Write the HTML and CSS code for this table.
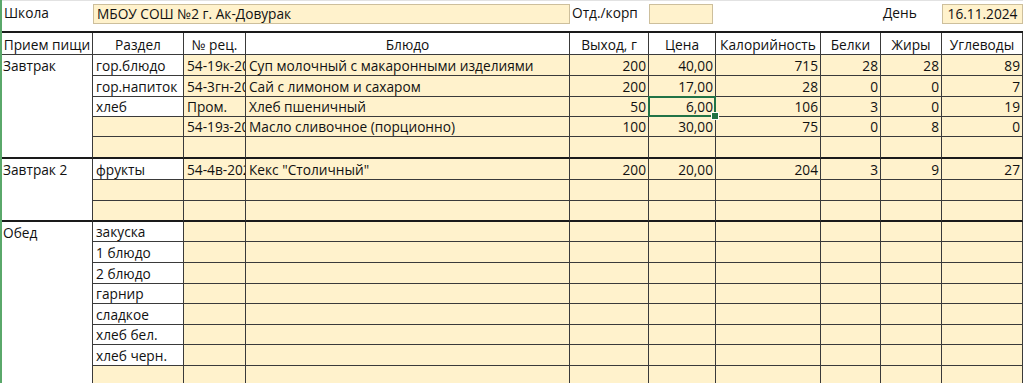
FILE: index.html
```html
<!DOCTYPE html>
<html lang="ru">
<head>
<meta charset="utf-8">
<title>Меню</title>
<link rel="stylesheet" href="styles.css">
</head>
<body>
<div class="page">
  <div class="top">
    <div class="lbl">Школа</div>
    <div class="box span3">МБОУ СОШ №2 г. Ак-Довурак</div>
    <div class="lbl">Отд./корп</div>
    <div class="box short"></div>
    <div class="lbl"></div>
    <div class="lbl"></div>
    <div class="lbl">День</div>
    <div class="box date">16.11.2024</div>
  </div>

  <div class="sheet">
    <div class="c h">Прием пищи</div>
    <div class="c h">Раздел</div>
    <div class="c h">№ рец.</div>
    <div class="c h">Блюдо</div>
    <div class="c h">Выход, г</div>
    <div class="c h">Цена</div>
    <div class="c h">Калорийность</div>
    <div class="c h">Белки</div>
    <div class="c h">Жиры</div>
    <div class="c h">Углеводы</div>

    <!-- Завтрак -->
    <div class="c meal span5 end">Завтрак</div>
    <div class="c w">гор.блюдо</div>
    <div class="c y">54-19к-2020</div>
    <div class="c y">Суп молочный с макаронными изделиями</div>
    <div class="c y n">200</div>
    <div class="c y n">40,00</div>
    <div class="c y n">715</div>
    <div class="c y n">28</div>
    <div class="c y n">28</div>
    <div class="c y n">89</div>

    <div class="c w">гор.напиток</div>
    <div class="c y">54-3гн-2020</div>
    <div class="c y">Сай с лимоном и сахаром</div>
    <div class="c y n">200</div>
    <div class="c y n">17,00</div>
    <div class="c y n">28</div>
    <div class="c y n">0</div>
    <div class="c y n">0</div>
    <div class="c y n">7</div>

    <div class="c w">хлеб</div>
    <div class="c y">Пром.</div>
    <div class="c y">Хлеб пшеничный</div>
    <div class="c y n">50</div>
    <div class="c y n sel">6,00</div>
    <div class="c y n">106</div>
    <div class="c y n">3</div>
    <div class="c y n">0</div>
    <div class="c y n">19</div>

    <div class="c y"></div>
    <div class="c y">54-19з-2020</div>
    <div class="c y">Масло сливочное (порционно)</div>
    <div class="c y n">100</div>
    <div class="c y n">30,00</div>
    <div class="c y n">75</div>
    <div class="c y n">0</div>
    <div class="c y n">8</div>
    <div class="c y n">0</div>

    <div class="c y end"></div>
    <div class="c y end"></div>
    <div class="c y end"></div>
    <div class="c y end"></div>
    <div class="c y end"></div>
    <div class="c y end"></div>
    <div class="c y end"></div>
    <div class="c y end"></div>
    <div class="c y end"></div>

    <!-- Завтрак 2 -->
    <div class="c meal span3 end">Завтрак 2</div>
    <div class="c w">фрукты</div>
    <div class="c y">54-4в-2020</div>
    <div class="c y">Кекс "Столичный"</div>
    <div class="c y n">200</div>
    <div class="c y n">20,00</div>
    <div class="c y n">204</div>
    <div class="c y n">3</div>
    <div class="c y n">9</div>
    <div class="c y n">27</div>

    <div class="c y"></div><div class="c y"></div><div class="c y"></div><div class="c y"></div><div class="c y"></div><div class="c y"></div><div class="c y"></div><div class="c y"></div><div class="c y"></div>

    <div class="c y end"></div><div class="c y end"></div><div class="c y end"></div><div class="c y end"></div><div class="c y end"></div><div class="c y end"></div><div class="c y end"></div><div class="c y end"></div><div class="c y end"></div>

    <!-- Обед -->
    <div class="c meal span9">Обед</div>
    <div class="c w">закуска</div>
    <div class="c y"></div><div class="c y"></div><div class="c y"></div><div class="c y"></div><div class="c y"></div><div class="c y"></div><div class="c y"></div><div class="c y"></div>

    <div class="c w">1 блюдо</div>
    <div class="c y"></div><div class="c y"></div><div class="c y"></div><div class="c y"></div><div class="c y"></div><div class="c y"></div><div class="c y"></div><div class="c y"></div>

    <div class="c w">2 блюдо</div>
    <div class="c y"></div><div class="c y"></div><div class="c y"></div><div class="c y"></div><div class="c y"></div><div class="c y"></div><div class="c y"></div><div class="c y"></div>

    <div class="c w">гарнир</div>
    <div class="c y"></div><div class="c y"></div><div class="c y"></div><div class="c y"></div><div class="c y"></div><div class="c y"></div><div class="c y"></div><div class="c y"></div>

    <div class="c w">сладкое</div>
    <div class="c y"></div><div class="c y"></div><div class="c y"></div><div class="c y"></div><div class="c y"></div><div class="c y"></div><div class="c y"></div><div class="c y"></div>

    <div class="c w">хлеб бел.</div>
    <div class="c y"></div><div class="c y"></div><div class="c y"></div><div class="c y"></div><div class="c y"></div><div class="c y"></div><div class="c y"></div><div class="c y"></div>

    <div class="c w">хлеб черн.</div>
    <div class="c y"></div><div class="c y"></div><div class="c y"></div><div class="c y"></div><div class="c y"></div><div class="c y"></div><div class="c y"></div><div class="c y"></div>

    <div class="c y"></div>
    <div class="c y"></div><div class="c y"></div><div class="c y"></div><div class="c y"></div><div class="c y"></div><div class="c y"></div><div class="c y"></div><div class="c y"></div>
  </div>
</div>
</body>
</html>
```

FILE: styles.css
```css
* { box-sizing: border-box; }

html, body {
  margin: 0;
  padding: 0;
  background: #ffffff;
  overflow: hidden;
}

body {
  font-family: "Open Sans", "Noto Sans", sans-serif;
  font-size: 13.7px;
  color: #111111;
}

.page {
  border-left: 2px solid #5aa86a;
  height: 383px;
  width: 1023px;
}

.top {
  display: grid;
  grid-template-columns: 91px 91px 62px 324px 79px 67px 105px 60px 61px 81px;
  height: 31px;
  border-top: 1px solid #e2e2e2;
  align-items: start;
}

.lbl {
  height: 24px;
  padding: 2px 0 0 2px;
  line-height: 20px;
  white-space: nowrap;
}

.box {
  margin-top: 3px;
  height: 20px;
  background: #fff2cc;
  border: 1px solid #cdbf9c;
  line-height: 18px;
  padding-left: 3px;
  white-space: nowrap;
  overflow: hidden;
}

.box.span3 { grid-column: span 3; }
.box.short { margin-right: 3px; }
.box.date { text-align: center; padding-left: 0; }

.sheet {
  display: grid;
  grid-template-columns: 91px 91px 62px 324px 79px 67px 105px 60px 61px 81px;
  grid-template-rows: 22px 21px 21px 20px 20px 22px 21px 21px 21px 20px 21px 21px 20px 21px 20px 21px 21px;
  border-top: 2px solid #1a1a1a;
}

.c {
  border-right: 1px solid #3a3a3a;
  border-bottom: 1px solid #3a3a3a;
  padding: 0 2px 0 3px;
  line-height: 19px;
  white-space: nowrap;
  overflow: hidden;
  display: flex;
  align-items: flex-end;
}

.h {
  background: #ffffff;
  justify-content: center;
  padding: 0;
}

.w { background: #ffffff; }
.y { background: #fff2cc; }
.n { justify-content: flex-end; }

.meal {
  background: #ffffff;
  align-items: flex-start;
  padding-top: 1px;
  padding-left: 1px;
}

.span5 { grid-row: span 5; }
.span3 { grid-row: span 3; }
.span9 { grid-row: span 12; border-bottom: none; }

.end { border-bottom: 2px solid #1a1a1a; }

.sel {
  position: relative;
  overflow: visible;
}

.sel::after {
  content: "";
  position: absolute;
  left: -1px;
  top: -1px;
  right: -1px;
  bottom: -1px;
  border: 2px solid #217346;
  pointer-events: none;
}

.sel::before {
  content: "";
  position: absolute;
  right: -4px;
  bottom: -4px;
  width: 6px;
  height: 6px;
  background: #217346;
  border: 1px solid #ffffff;
  z-index: 2;
}
```
